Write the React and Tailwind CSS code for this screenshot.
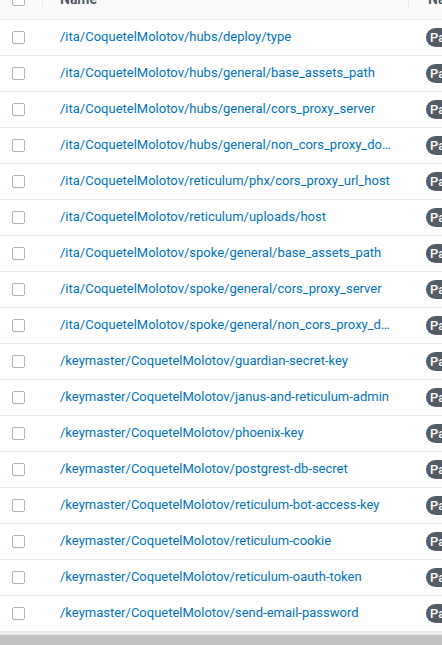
import React from 'react';

const names = [
  '/ita/CoquetelMolotov/hubs/deploy/type',
  '/ita/CoquetelMolotov/hubs/general/base_assets_path',
  '/ita/CoquetelMolotov/hubs/general/cors_proxy_server',
  '/ita/CoquetelMolotov/hubs/general/non_cors_proxy_domains',
  '/ita/CoquetelMolotov/reticulum/phx/cors_proxy_url_host',
  '/ita/CoquetelMolotov/reticulum/uploads/host',
  '/ita/CoquetelMolotov/spoke/general/base_assets_path',
  '/ita/CoquetelMolotov/spoke/general/cors_proxy_server',
  '/ita/CoquetelMolotov/spoke/general/non_cors_proxy_domains',
  '/keymaster/CoquetelMolotov/guardian-secret-key',
  '/keymaster/CoquetelMolotov/janus-and-reticulum-admin',
  '/keymaster/CoquetelMolotov/phoenix-key',
  '/keymaster/CoquetelMolotov/postgrest-db-secret',
  '/keymaster/CoquetelMolotov/reticulum-bot-access-key',
  '/keymaster/CoquetelMolotov/reticulum-cookie',
  '/keymaster/CoquetelMolotov/reticulum-oauth-token',
  '/keymaster/CoquetelMolotov/send-email-password',
];

const Checkbox = () => (
  <span className="block w-[13px] h-[13px] border border-[#aab7b8] rounded-[2px] bg-white" />
);

const App = () => {
  return (
    <div className="w-[442px] h-[645px] overflow-hidden bg-white flex flex-col" style={{ fontFamily: 'Roboto, "Liberation Sans", sans-serif' }}>
      <div className="flex-1 overflow-hidden">
        <div className="w-[700px]">
          {/* Header (scrolled partly out of view) */}
          <div className="h-[20px] overflow-hidden bg-[#fafafa] border-b border-[#eaeded]">
            <div className="flex items-center h-[40px] -mt-[21px] text-[14px] font-bold text-[#545b64]">
              <div className="w-[43px] flex justify-start pl-[12px] border-r border-[#eaeded] h-[20px] items-center">
                <Checkbox />
              </div>
              <div className="w-[366px] pl-[17px] border-r border-[#eaeded] h-[20px] flex items-center">Name</div>
              <div className="pl-[19px]">Name</div>
            </div>
          </div>

          {names.map((name) => (
            <div key={name} className="flex items-center h-[36px] border-b border-[#eaeded] text-[13px]">
              <div className="w-[43px] pl-[12px] flex items-center">
                <Checkbox />
              </div>
              <div className="w-[366px] pl-[17px] pr-[12px] truncate text-[#0073bb] pb-[1px]">{name}</div>
              <div className="pl-[17px]">
                <span className="inline-flex items-center h-[19px] px-[4px] rounded-full bg-[#545b64] text-white text-[13px] font-medium">
                  Parameter
                </span>
              </div>
            </div>
          ))}
          <div className="h-[3px] bg-[#eaeded]" />
        </div>
      </div>
      <div className="h-[10px] bg-[#c1c1c1] shrink-0" />
    </div>
  );
};

export default App;
